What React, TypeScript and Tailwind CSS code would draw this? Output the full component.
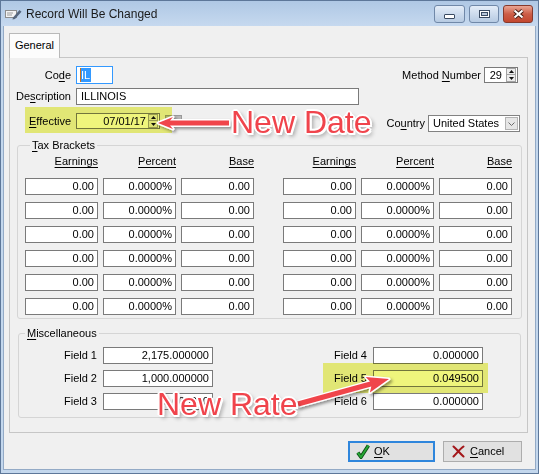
import React from "react";

type P = { children?: React.ReactNode; className?: string };

// Accelerator-key underline
const U = ({ children }: P) => (
  <span className="underline decoration-1 underline-offset-[2px]">{children}</span>
);

function Field({ children, className = "" }: P) {
  return (
    <div
      className={`flex items-center justify-end border border-[#7a7a7a] bg-white pr-[3px] ${className}`}
    >
      {children}
    </div>
  );
}

function Tri({ down }: { down?: boolean }) {
  return (
    <svg width="5" height="3" viewBox="0 0 5 3">
      <path d={down ? "M0 0H5L2.5 3Z" : "M0 3H5L2.5 0Z"} fill="#111" />
    </svg>
  );
}

function Spin() {
  return (
    <div className="mr-px flex flex-col">
      <div className="flex h-[7px] w-[10px] items-center justify-center border border-[#a3a3a3] bg-[#ececec]">
        <Tri />
      </div>
      <div className="flex h-[7px] w-[10px] items-center justify-center border border-t-0 border-[#a3a3a3] bg-[#ececec]">
        <Tri down />
      </div>
    </div>
  );
}

// Polygon for a callout arrow from tail (tx,ty) to tip (px,py)
function arrow(tx: number, ty: number, px: number, py: number, hl = 16, h = 7) {
  const dx = px - tx;
  const dy = py - ty;
  const len = Math.hypot(dx, dy);
  const ux = dx / len;
  const uy = dy / len;
  const nx = -uy;
  const ny = ux;
  const s = 2.5;
  const back = 3;
  const bx = px - ux * hl;
  const by = py - uy * hl;
  const pts = [
    [tx + nx * s, ty + ny * s],
    [bx + nx * s, by + ny * s],
    [bx - ux * back + nx * h, by - uy * back + ny * h],
    [px, py],
    [bx - ux * back - nx * h, by - uy * back - ny * h],
    [bx - nx * s, by - ny * s],
    [tx - nx * s, ty - ny * s],
  ];
  return pts.map((p) => p.map((v) => v.toFixed(1)).join(",")).join(" ");
}

const bracketRows = [0, 1, 2, 3, 4, 5];

function BracketBlock() {
  return (
    <div className="flex flex-col">
      <div className="grid grid-cols-[73px_73px_73px] gap-x-[5px]">
        <div className="text-right">
          <span className="underline decoration-1 underline-offset-[2px]">Earnings</span>
        </div>
        <div className="text-right">
          <span className="underline decoration-1 underline-offset-[2px]">Percent</span>
        </div>
        <div className="text-right">
          <span className="underline decoration-1 underline-offset-[2px]">Base</span>
        </div>
      </div>
      <div className="mt-[10px] grid grid-cols-[73px_73px_73px] gap-x-[5px] gap-y-[7px]">
        {bracketRows.map((r) => (
          <React.Fragment key={r}>
            <Field className="h-[17px]">0.00</Field>
            <Field className="h-[17px]">0.0000%</Field>
            <Field className="h-[17px]">0.00</Field>
          </React.Fragment>
        ))}
      </div>
    </div>
  );
}

const annot =
  "absolute font-['Liberation_Sans',Arial,sans-serif] text-[32px] leading-[32px] text-[#f0444c] whitespace-nowrap [text-shadow:1px_1px_0_#fff,-1px_-1px_0_#fff,1px_-1px_0_#fff,-1px_1px_0_#fff,2px_0_0_#fff,-2px_0_0_#fff,0_2px_0_#fff,0_-2px_0_#fff,2px_2px_0_#fff,3px_3px_4px_rgba(0,0,0,0.45)]";

export default function App() {
  return (
    <div className="relative flex h-[474px] w-[539px] flex-col overflow-hidden bg-[#c3d7ed] font-['Liberation_Sans',Arial,sans-serif] text-[11px] leading-[13px] text-black">
      {/* title bar */}
      <div className="flex h-[26px] items-center bg-linear-to-b from-[#aec7e4] to-[#c6d9ef] pl-[5px]">
        <svg width="17" height="12" viewBox="0 0 17 12" className="mt-[2px]">
          <rect x="0.5" y="2.5" width="11" height="7" fill="#f4f4f4" stroke="#8d8d8d" />
          <rect x="2" y="4.5" width="6" height="1" fill="#9a9a9a" />
          <rect x="2" y="6.5" width="5" height="1" fill="#9a9a9a" />
          <path d="M8 9.5 L14.5 2 L16.5 3.8 L10 11 L7.5 11.5Z" fill="#56677e" />
        </svg>
        <span className="ml-[4px] mt-[2px] text-[12px] text-[#1b1b1b]">Record Will Be Changed</span>
        <div className="ml-auto mr-[6px] flex gap-[4px] self-start pt-[5px]">
          <div className="flex h-[18px] w-[31px] items-end justify-center rounded-[3px] border border-[#7088a8] bg-linear-to-b from-[#e4edf8] to-[#b6cae2] pb-[3px]">
            <div className="h-[5px] w-[11px] rounded-[1px] border border-[#3a4b62] bg-white" />
          </div>
          <div className="flex h-[18px] w-[30px] items-center justify-center rounded-[3px] border border-[#7088a8] bg-linear-to-b from-[#e4edf8] to-[#b6cae2]">
            <div className="flex h-[8px] w-[11px] items-center justify-center border border-[#3a4b62] bg-white">
              <div className="h-[4px] w-[7px] border border-[#3a4b62] bg-[#b9c8db]" />
            </div>
          </div>
          <div className="flex h-[18px] w-[30px] items-center justify-center rounded-[3px] border border-[#86392c] bg-linear-to-b from-[#e9a594] via-[#cc5d47] to-[#c4472f]">
            <svg width="13" height="10" viewBox="0 0 13 10">
              <path d="M2.5 1.5 L10.5 8.5 M10.5 1.5 L2.5 8.5" stroke="#3d1a12" strokeWidth="3.8" />
              <path d="M2.5 1.5 L10.5 8.5 M10.5 1.5 L2.5 8.5" stroke="#fff" strokeWidth="2.1" />
            </svg>
          </div>
        </div>
      </div>

      {/* client area */}
      <div className="mx-[3px] mb-[4px] flex flex-1 flex-col border-x border-b border-[#93aac6] bg-[#f0f0f0] pl-[5px] pt-[7px]">
        <div className="relative z-10 -mb-px flex h-[25px] w-[51px] items-center justify-center border border-b-0 border-[#b9b9b9] bg-[#fcfcfc] pb-[1px]">
          General
        </div>
        <div className="flex h-[376px] w-[519px] flex-col border border-[#c6c6c6] bg-[#f0f0f0]">
          {/* code / method number */}
          <div className="mt-[8px] flex h-[18px] items-center">
            <div className="w-[61px] text-right">
              Co<U>d</U>e
            </div>
            <div className="ml-[5px] flex h-[18px] w-[37px] items-center border border-[#3399ff] bg-white pl-[3px]">
              <span className="h-[14px] w-px bg-[#c8701f]" />
              <span className="flex h-[14px] items-center bg-[#3399ff] pr-px text-white">IL</span>
            </div>
            <div className="ml-auto mr-[9px] flex items-center">
              <span>
                Method <U>N</U>umber
              </span>
              <div className="ml-[3px] flex h-[16px] w-[34px] items-center justify-end border border-[#7a7a7a] bg-white">
                <span className="mr-[4px]">29</span>
                <Spin />
              </div>
            </div>
          </div>

          {/* description */}
          <div className="mt-[4px] flex items-center">
            <div className="w-[61px] text-right">
              De<U>s</U>cription
            </div>
            <div className="ml-[5px] flex h-[17px] w-[283px] items-center border border-[#7a7a7a] bg-white pl-[4px]">
              ILLINOIS
            </div>
          </div>

          {/* effective / country */}
          <div className="mt-[8px] flex items-start">
            <div className="flex h-[16px] w-[61px] items-center justify-end">
              <U>E</U>ffective
            </div>
            <div className="ml-[5px] flex h-[16px] w-[84px] items-center justify-end border border-[#7a7a7a] bg-white">
              <span className="mr-[2px]">07/01/17</span>
              <Spin />
            </div>
            <div className="ml-[5px] mt-[2px] flex h-[12px] w-[17px] items-center justify-center border border-[#9a9a9a] bg-[#b9b9b9] text-[10px] font-bold leading-[10px] text-[#222]">
              ...
            </div>
            <div className="ml-auto mr-[7px] mt-[2px] flex items-center">
              <span>
                Co<U>u</U>ntry
              </span>
              <div className="ml-[3px] flex h-[17px] w-[92px] items-center border border-[#828282] bg-white">
                <span className="pl-[4px]">United States</span>
                <div className="ml-auto mr-px flex h-[13px] w-[13px] items-center justify-center border border-[#b3b3b3] bg-[#e6e6e6]">
                  <svg width="7" height="4" viewBox="0 0 7 4">
                    <path d="M0.5 0.5 L3.5 3.5 L6.5 0.5" stroke="#6b6b6b" fill="none" strokeWidth="1" />
                  </svg>
                </div>
              </div>
            </div>
          </div>

          {/* tax brackets */}
          <fieldset className="ml-[7px] mt-[7px] w-[505px] rounded-[3px] border border-[#d5d5d5] pb-[3px] pl-[7px]">
            <legend className="ml-[5px] px-[2px]">
              <U>T</U>ax Brackets
            </legend>
            <div className="mt-[3px] flex gap-[29px]">
              <BracketBlock />
              <BracketBlock />
            </div>
          </fieldset>

          {/* miscellaneous */}
          <fieldset className="ml-[8px] mt-[8px] w-[503px] rounded-[3px] border border-[#d5d5d5] pb-[7px]">
            <legend className="ml-[6px] px-[2px]">
              <U>M</U>iscellaneous
            </legend>
            <div className="mt-[7px] grid grid-cols-[78px_110px_148px_110px] gap-x-[6px] gap-y-[6px]">
              <div className="flex items-center justify-end">Field 1</div>
              <Field className="h-[17px]">2,175.000000</Field>
              <div className="flex items-center justify-end">Field 4</div>
              <Field className="h-[17px]">0.000000</Field>
              <div className="flex items-center justify-end">Field 2</div>
              <Field className="h-[17px]">1,000.000000</Field>
              <div className="flex items-center justify-end">Field 5</div>
              <Field className="h-[17px]">0.049500</Field>
              <div className="flex items-center justify-end">Field 3</div>
              <Field className="h-[17px]">0.000000</Field>
              <div className="flex items-center justify-end">Field 6</div>
              <Field className="h-[17px]">0.000000</Field>
            </div>
          </fieldset>
        </div>

        {/* dialog buttons */}
        <div className="mt-[8px] flex justify-end gap-[8px] pr-[13px]">
          <button className="flex h-[21px] w-[87px] items-center border-2 border-[#2f86dc] bg-[#e1e1e1] pl-[6px]">
            <svg width="14" height="15" viewBox="0 0 14 15">
              <path d="M1.8 8.6 L5 13 L12.4 1.6" stroke="#0c4a12" strokeWidth="3.6" fill="none" />
              <path d="M1.8 8.6 L5 13 L12.4 1.6" stroke="#28a836" strokeWidth="1.9" fill="none" />
            </svg>
            <span className="ml-[4px]">
              <U>O</U>K
            </span>
          </button>
          <button className="flex h-[21px] w-[79px] items-center border border-[#adadad] bg-[#e1e1e1] pl-[8px]">
            <svg width="13" height="13" viewBox="0 0 13 13">
              <path
                d="M1.5 1.5 C5 4.5 8 8.5 11.5 11.5 M11.5 1.5 C8 4 5 8 1.5 11.5"
                stroke="#a3161a"
                strokeWidth="2.1"
                fill="none"
                strokeLinecap="round"
              />
            </svg>
            <span className="ml-[5px]">
              <U>C</U>ancel
            </span>
          </button>
        </div>
      </div>

      {/* window frame outline */}
      <div className="pointer-events-none absolute inset-0 border border-[#5d7799]" />

      {/* highlighter marks */}
      <div className="pointer-events-none absolute left-[25px] top-[107px] h-[26px] w-[147px] bg-[#eff57c] mix-blend-multiply" />
      <div className="pointer-events-none absolute left-[323px] top-[363px] h-[30px] w-[165px] bg-[#eff57c] mix-blend-multiply" />

      {/* callout arrows */}
      <svg className="pointer-events-none absolute left-0 top-0" width="539" height="474">
        <defs>
          <filter id="callout-shadow" x="-20%" y="-60%" width="140%" height="220%">
            <feDropShadow dx="2" dy="2" stdDeviation="1.5" floodColor="#000" floodOpacity="0.4" />
          </filter>
        </defs>
        <polygon
          points={arrow(229, 123, 158, 123, 12, 6)}
          fill="#f0444c"
          stroke="#fff"
          strokeWidth="3"
          strokeLinejoin="round"
          paintOrder="stroke"
          filter="url(#callout-shadow)"
        />
        <polygon
          points={arrow(298, 404, 389, 379, 19, 8)}
          fill="#f0444c"
          stroke="#fff"
          strokeWidth="3"
          strokeLinejoin="round"
          paintOrder="stroke"
          filter="url(#callout-shadow)"
        />
      </svg>

      <div className={`${annot} left-[231px] top-[106px]`}>New Date</div>
      <div className={`${annot} left-[157px] top-[388px]`}>New Rate</div>
    </div>
  );
}
